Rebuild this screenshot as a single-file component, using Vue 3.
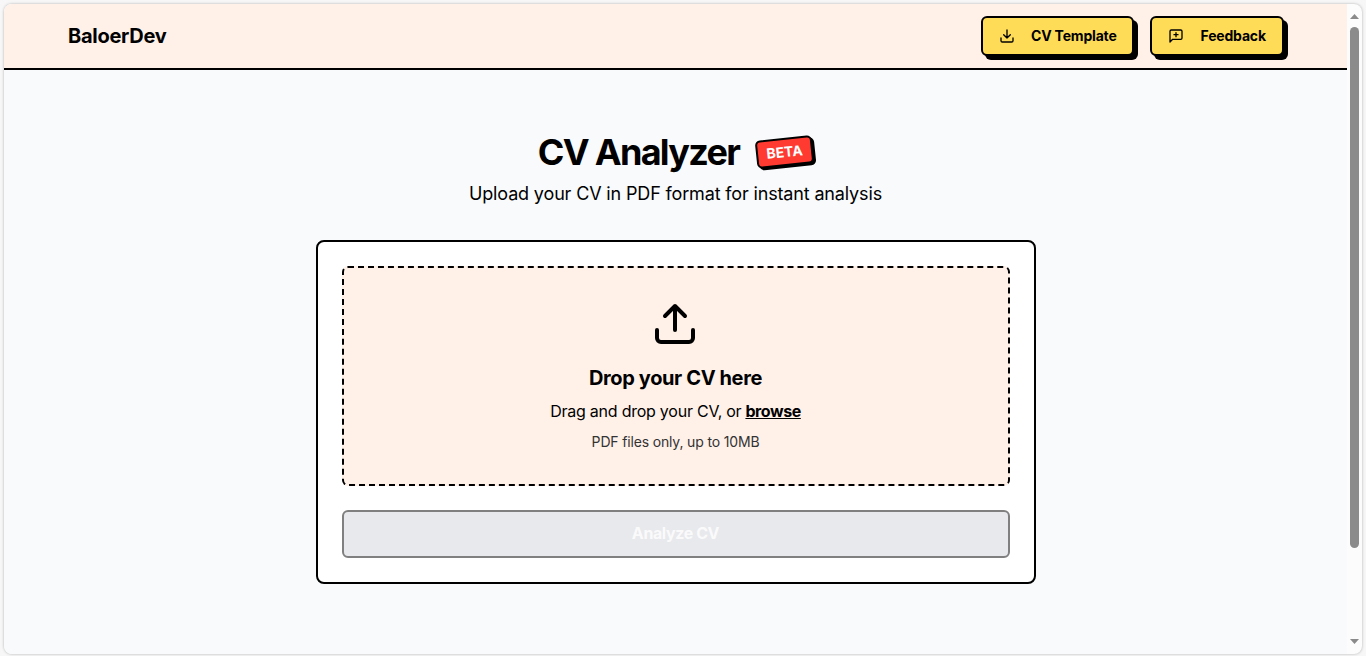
<script setup>
const actions = [
  { label: 'CV Template', icon: 'download', cls: 'template' },
  { label: 'Feedback', icon: 'feedback', cls: 'feedback' },
]
</script>

<template>
  <div class="window">
    <div class="page">
      <header class="topbar">
        <div class="brand"><span>BaloerDev</span></div>
        <nav class="actions">
          <button v-for="a in actions" :key="a.label" class="action" :class="a.cls">
            <svg v-if="a.icon === 'download'" viewBox="0 0 24 24" class="icon">
              <path d="M12 15V3M7 10l5 5 5-5M21 15v4a2 2 0 0 1-2 2H5a2 2 0 0 1-2-2v-4" />
            </svg>
            <svg v-else viewBox="0 0 24 24" class="icon">
              <path d="M21 15a2 2 0 0 1-2 2H7l-4 4V5a2 2 0 0 1 2-2h14a2 2 0 0 1 2 2zM12 7v6M9 10h6" />
            </svg>
            <span class="label">{{ a.label }}</span>
          </button>
        </nav>
      </header>

      <main class="main">
        <div class="title-row">
          <h1><span>CV Analyzer</span></h1>
          <span class="beta">BETA</span>
        </div>
        <p class="subtitle">Upload your CV in PDF format for instant analysis</p>

        <section class="card">
          <div class="dropzone">
            <svg viewBox="0 0 24 24" class="upload">
              <path d="M12 15V3M17 8l-5-5-5 5M21 15v4a2 2 0 0 1-2 2H5a2 2 0 0 1-2-2v-4" />
            </svg>
            <h2>Drop your CV here</h2>
            <p class="drag"><span>Drag and drop your CV, or</span><a>browse</a></p>
            <p class="hint">PDF files only, up to 10MB</p>
          </div>
          <button class="analyze" disabled>Analyze CV</button>
        </section>
      </main>
    </div>

    <div class="scrollbar">
      <svg viewBox="0 0 9 5" class="arrow"><path d="M0 5L4.5 0L9 5z" /></svg>
      <div class="thumb"></div>
      <svg viewBox="0 0 9 5" class="arrow down"><path d="M0 0L4.5 5L9 0z" /></svg>
    </div>
  </div>
</template>

<style>
body {
  background: #f7f7f7;
  overflow: hidden;
}
</style>

<style scoped>
* {
  box-sizing: border-box;
}
.window {
  display: flex;
  width: 1358px;
  height: 650px;
  margin: 4px;
  border-radius: 8px;
  overflow: hidden;
  background: #fcfcfc;
  box-shadow: 0 0 3px rgba(0, 0, 0, 0.28);
  font-family: Inter, "Liberation Sans", sans-serif;
  color: #000;
}
.page {
  width: 1343px;
  background: #f9fafc;
}
.topbar {
  display: flex;
  justify-content: space-between;
  height: 66px;
  padding: 12px 63px 0 64px;
  background: #fff0e8;
  border-bottom: 2px solid #000;
}
.brand {
  font-size: 20px;
  line-height: 40px;
  font-weight: 650;
  letter-spacing: -0.28px;
}
.actions {
  display: flex;
  gap: 16px;
}
.action {
  display: flex;
  align-items: center;
  gap: 16px;
  height: 40px;
  padding: 0 0 0 16px;
  border: 2px solid #000;
  border-radius: 6px;
  background: #ffdc58;
  box-shadow: 4px 4px 0 #000;
  font: 650 14px Inter, sans-serif;
  letter-spacing: -0.18px;
  color: #000;
  white-space: nowrap;
}
.label {
  padding-bottom: 2px;
}
.template {
  width: 153px;
}
.feedback {
  width: 134px;
}
.feedback .label {
  padding-left: 0.5px;
}
.icon {
  width: 16px;
  height: 16px;
  fill: none;
  stroke: #000;
  stroke-width: 2;
  stroke-linecap: round;
  stroke-linejoin: round;
}
.main {
  display: flex;
  flex-direction: column;
  align-items: center;
  padding-top: 62px;
}
.title-row {
  display: flex;
  align-items: center;
  gap: 17px;
  height: 40px;
}
h1 {
  margin: 0;
  font-size: 36px;
  line-height: 40px;
  font-weight: 650;
  letter-spacing: -1.7px;
}
.beta {
  width: 57px;
  height: 28px;
  border: 2px solid #000;
  border-radius: 5px;
  background: #ff3a30;
  box-shadow: 2px 2px 0 #000;
  color: #fff;
  font-size: 14px;
  font-weight: 700;
  line-height: 23px;
  text-align: center;
  transform: rotate(-6deg);
}
.subtitle {
  margin: 8px 0 0;
  font-size: 18px;
  line-height: 28px;
  letter-spacing: -0.15px;
}
.card {
  width: 720px;
  height: 344px;
  margin-top: 32px;
  padding: 24px;
  border: 2px solid #000;
  border-radius: 8px;
  background: #fff;
}
.dropzone {
  display: flex;
  flex-direction: column;
  align-items: center;
  height: 220px;
  padding-top: 32px;
  border: 2px dashed #000;
  border-radius: 6px;
  background: #fff0e8;
}
.upload {
  width: 48px;
  height: 48px;
  margin-right: 2px;
  fill: none;
  stroke: #000;
  stroke-width: 2;
  stroke-linecap: round;
  stroke-linejoin: round;
}
h2 {
  margin: 16px 0 0;
  font-size: 20px;
  line-height: 28px;
  font-weight: 650;
  letter-spacing: -0.38px;
}
.drag {
  display: flex;
  gap: 4px;
  margin: 7px 0 0;
  font-size: 16px;
  line-height: 24px;
  letter-spacing: -0.24px;
}
.drag a {
  font-weight: 700;
  letter-spacing: -0.42px;
  text-decoration: underline;
}
.hint {
  margin: 9px 0 0;
  font-size: 14px;
  line-height: 20px;
  letter-spacing: -0.16px;
  color: #333;
}
.analyze {
  display: block;
  width: 100%;
  height: 48px;
  margin-top: 24px;
  padding: 0 0 2px;
  border: 2px solid #808080;
  border-radius: 6px;
  background: #e8e9ec;
  color: #fafafb;
  font: 700 16px Inter, sans-serif;
  letter-spacing: -0.4px;
}
.scrollbar {
  display: flex;
  flex-direction: column;
  align-items: center;
  width: 15px;
  padding: 10px 0;
}
.arrow {
  width: 9px;
  height: 5px;
  fill: #8a8a8a;
}
.thumb {
  width: 9px;
  height: 521px;
  margin-top: 8px;
  border-radius: 5px;
  background: #8b8b8b;
}
.down {
  margin-top: auto;
}
</style>
